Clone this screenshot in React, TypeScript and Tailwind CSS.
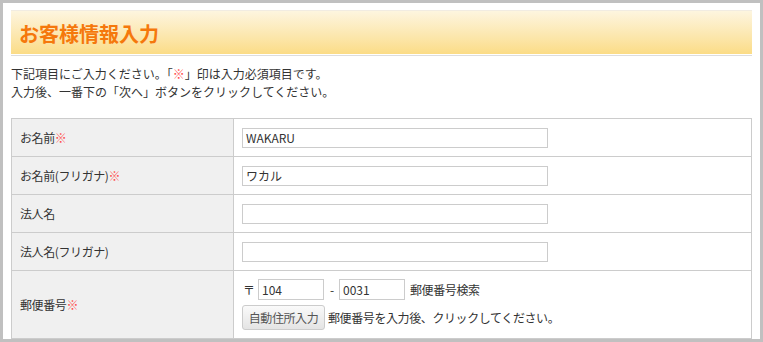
const font = { fontFamily: '"Noto Sans CJK JP", "Noto Sans", sans-serif' };

type Row = { label: string; required?: boolean; value?: string };

const rows: Row[] = [
  { label: 'お名前', required: true, value: 'WAKARU' },
  { label: 'お名前(フリガナ)', required: true, value: 'ワカル' },
  { label: '法人名' },
  { label: '法人名(フリガナ)' },
];

const Req = () => <span className="text-[#ff4d4d]">※</span>;

const TextBox = ({ value, className }: { value?: string; className: string }) => (
  <div
    className={`flex items-center border border-[#cccccc] bg-white pl-[3px] text-[12px] text-[#333333] ${className}`}
  >
    {value}
  </div>
);

export default function App() {
  return (
    <div className="h-[342px] w-[763px] bg-[#c0c0c0] p-[3px]" style={font}>
      <div className="h-[336px] overflow-hidden bg-white px-[8px] pt-[7px]">
        <div className="border-b border-[#dddddd] pb-[1px]">
          <div className="flex h-[44px] items-center border-t border-[#f1ece2] bg-gradient-to-b from-[#fdf5df] to-[#fbdc86] pl-[8px] pt-[2px]">
            <h1 className="text-[20px] font-bold text-[#f5780c]">お客様情報入力</h1>
          </div>
        </div>

        <div className="mt-[9px] text-[12px] leading-[18px] text-[#333333]">
          <p>
            下記項目にご入力ください。「<Req />」印は入力必須項目です。
          </p>
          <p>入力後、一番下の「次へ」ボタンをクリックしてください。</p>
        </div>

        <div className="mt-[17px] border-x border-t border-[#cccccc] text-[12px] tracking-[-0.4px] text-[#333333]">
          {rows.map((r) => (
            <div key={r.label} className="grid h-[38px] grid-cols-[222px_1fr] border-b border-[#cccccc]">
              <div className="flex items-center border-r border-[#cccccc] bg-[#f0f0f0] pl-[8px]">
                {r.label}
                {r.required && <Req />}
              </div>
              <div className="flex items-center pl-[8px]">
                <TextBox value={r.value} className="h-[20px] w-[306px] tracking-normal" />
              </div>
            </div>
          ))}

          <div className="grid grid-cols-[222px_1fr] border-b border-[#cccccc]">
            <div className="flex items-center border-r border-[#cccccc] bg-[#f0f0f0] pl-[8px]">
              郵便番号
              <Req />
            </div>
            <div className="flex flex-col gap-[5px] py-[8px] pl-[8px]">
              <div className="flex items-center">
                <span className="ml-[1px] w-[15px]">〒</span>
                <TextBox value="104" className="h-[21px] w-[66px] tracking-normal" />
                <span className="ml-[6px] w-[9px]">-</span>
                <TextBox value="0031" className="h-[21px] w-[66px] tracking-normal" />
                <span className="ml-[5px]">郵便番号検索</span>
              </div>
              <div className="flex items-center">
                <button className="h-[25px] w-[83px] rounded-[3px] border border-[#cccccc] bg-gradient-to-b from-[#fafafa] to-[#e4e4e4] text-[12px] tracking-[-0.4px] text-[#555555]">
                  自動住所入力
                </button>
                <span className="ml-[3px]">郵便番号を入力後、クリックしてください。</span>
              </div>
            </div>
          </div>
        </div>
      </div>
    </div>
  );
}
